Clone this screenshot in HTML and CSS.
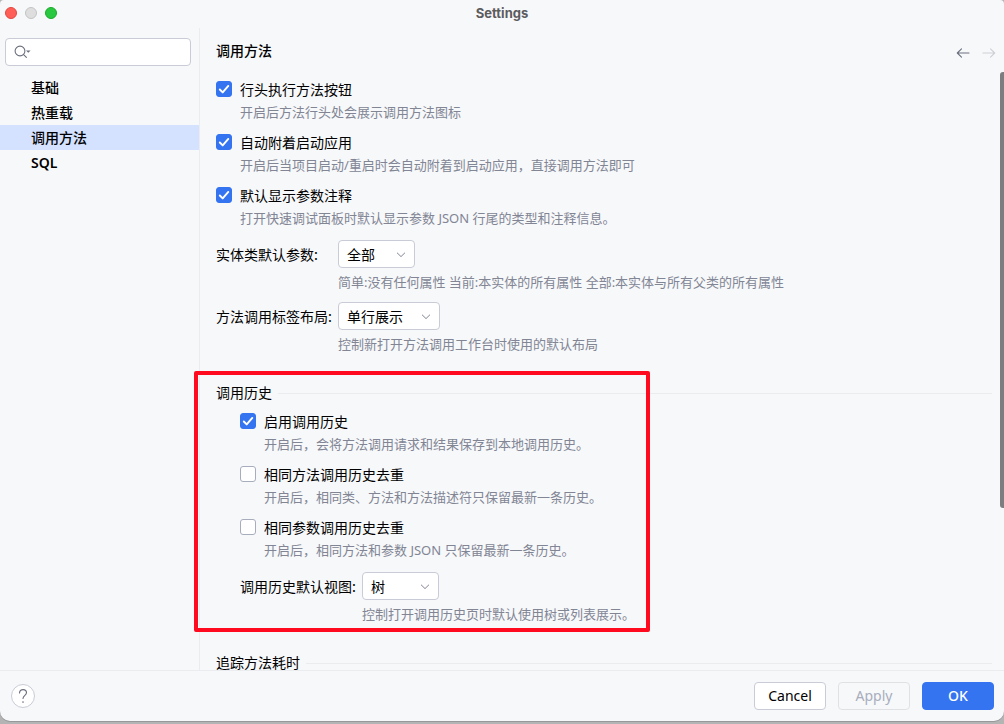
FILE: index.html
```html
<!DOCTYPE html>
<html lang="zh-CN">
<head>
<meta charset="utf-8">
<title>Settings</title>
<link rel="stylesheet" href="styles.css">
</head>
<body>
<svg class="symbols" aria-hidden="true">
  <symbol id="check" viewBox="0 0 16 16"><path d="M3.8 8.5L6.7 11.4L12.3 4.9" fill="none" stroke="#fff" stroke-width="1.9" stroke-linecap="round" stroke-linejoin="round"/></symbol>
  <symbol id="chevron" viewBox="0 0 16 16"><path d="M4.3 7L8 10.6L11.7 7" fill="none" stroke="#818594" stroke-width="1" stroke-linecap="round" stroke-linejoin="round"/></symbol>
</svg>
<div class="window">
  <header class="titlebar">
    <div class="lights">
      <button class="light light-close" aria-label="Close"></button>
      <button class="light light-min" aria-label="Minimize"></button>
      <button class="light light-max" aria-label="Zoom"></button>
    </div>
    <h1 class="window-title">Settings</h1>
  </header>

  <div class="body">
    <aside class="sidebar">
      <div class="search">
        <svg class="search-icon" viewBox="0 0 18 16" aria-hidden="true">
          <circle cx="6" cy="7" r="4.9" fill="none" stroke="#6c707e" stroke-width="1.1"/>
          <path d="M9.6 10.6L12.4 13.4" stroke="#6c707e" stroke-width="1.1" stroke-linecap="round"/>
          <path d="M12 6.4H16.6L14.3 8.8Z" fill="#6c707e"/>
        </svg>
        <input class="search-input" type="text" aria-label="Search">
      </div>
      <nav class="nav">
        <a class="nav-item" href="#">基础</a>
        <a class="nav-item" href="#">热重载</a>
        <a class="nav-item selected" href="#" aria-current="page">调用方法</a>
        <a class="nav-item latin" href="#">SQL</a>
      </nav>
    </aside>

    <main class="content">
      <div class="page-head">
        <h2 class="page-title">调用方法</h2>
        <div class="history-nav">
          <button class="arrow" aria-label="Back"><svg viewBox="0 0 16 16"><path d="M14 8H2.5M6.5 3.8L2.3 8L6.5 12.2" fill="none" stroke="#6c707e" stroke-width="1.1" stroke-linecap="round" stroke-linejoin="round"/></svg></button>
          <button class="arrow" aria-label="Forward" disabled><svg viewBox="0 0 16 16"><path d="M2 8H13.5M9.5 3.8L13.7 8L9.5 12.2" fill="none" stroke="#cdcfd5" stroke-width="1.1" stroke-linecap="round" stroke-linejoin="round"/></svg></button>
        </div>
      </div>

      <div class="panel">
        <div class="options">
          <div class="option">
            <label class="option-label"><span class="box"><input type="checkbox" checked><svg><use href="#check"/></svg></span>行头执行方法按钮</label>
            <p class="hint">开启后方法行头处会展示调用方法图标</p>
          </div>
          <div class="option">
            <label class="option-label"><span class="box"><input type="checkbox" checked><svg><use href="#check"/></svg></span>自动附着启动应用</label>
            <p class="hint">开启后当项目启动/重启时会自动附着到启动应用，直接调用方法即可</p>
          </div>
          <div class="option">
            <label class="option-label"><span class="box"><input type="checkbox" checked><svg><use href="#check"/></svg></span>默认显示参数注释</label>
            <p class="hint">打开快速调试面板时默认显示参数 JSON 行尾的类型和注释信息。</p>
          </div>
        </div>

        <div class="fields">
          <label class="field-label" for="entity">实体类默认参数:</label>
          <div class="dropdown"><select id="entity"><option>全部</option></select><svg><use href="#chevron"/></svg></div>
          <p class="field-hint">简单:没有任何属性 当前:本实体的所有属性 全部:本实体与所有父类的所有属性</p>
          <label class="field-label second" for="layout">方法调用标签布局:</label>
          <div class="dropdown second"><select id="layout" class="wide"><option>单行展示</option></select><svg><use href="#chevron"/></svg></div>
          <p class="field-hint">控制新打开方法调用工作台时使用的默认布局</p>
        </div>

        <section class="group">
          <h3 class="group-title">调用历史</h3>
          <div class="group-body">
            <div class="options">
              <div class="option">
                <label class="option-label"><span class="box"><input type="checkbox" checked><svg><use href="#check"/></svg></span>启用调用历史</label>
                <p class="hint">开启后，会将方法调用请求和结果保存到本地调用历史。</p>
              </div>
              <div class="option">
                <label class="option-label"><span class="box"><input type="checkbox"><svg><use href="#check"/></svg></span>相同方法调用历史去重</label>
                <p class="hint">开启后，相同类、方法和方法描述符只保留最新一条历史。</p>
              </div>
              <div class="option">
                <label class="option-label"><span class="box"><input type="checkbox"><svg><use href="#check"/></svg></span>相同参数调用历史去重</label>
                <p class="hint">开启后，相同方法和参数 JSON 只保留最新一条历史。</p>
              </div>
            </div>
            <div class="fields">
              <label class="field-label" for="view">调用历史默认视图:</label>
              <div class="dropdown"><select id="view"><option>树</option></select><svg><use href="#chevron"/></svg></div>
              <p class="field-hint">控制打开调用历史页时默认使用树或列表展示。</p>
            </div>
          </div>
          <div class="highlight"></div>
        </section>

        <section class="group">
          <h3 class="group-title">追踪方法耗时</h3>
        </section>
      </div>
      <div class="scroll-thumb"></div>
    </main>
  </div>

  <footer class="footer">
    <button class="help" aria-label="Help"><svg viewBox="0 0 24 24"><path d="M8.2 8.6C8.2 6.4 9.8 5 12 5C14.2 5 15.8 6.4 15.8 8.4C15.8 11.2 12 11.4 12 14.8" fill="none" stroke="#6c707e" stroke-width="1.2" stroke-linecap="round"/><circle cx="12" cy="18.6" r="0.9" fill="#6c707e"/></svg></button>
    <div class="actions">
      <button class="btn">Cancel</button>
      <button class="btn" disabled>Apply</button>
      <button class="btn primary">OK</button>
    </div>
  </footer>
</div>
</body>
</html>
```
FILE: styles.css
```css
* {
  box-sizing: border-box;
}

body {
  margin: 0;
  height: 100vh;
  padding-bottom: 3px;
  background: #b4b4b5;
  color: #000;
  font: 14px/24px "Noto Sans CJK SC", sans-serif;
}

h1, h2, h3, p {
  margin: 0;
}

button, input, select {
  margin: 0;
  padding: 0;
  font: inherit;
}

.symbols {
  position: absolute;
  width: 0;
  height: 0;
}

.window {
  display: flex;
  flex-direction: column;
  height: 100%;
  overflow: hidden;
  background: #f7f8fa;
  border-radius: 4px 4px 10px 10px;
  box-shadow: 0 1px 0 #98989a;
}

.titlebar {
  display: grid;
  grid-template-columns: 1fr auto 1fr;
  align-items: center;
  height: 28px;
  padding: 0 5px 2px;
}

.lights {
  display: flex;
  gap: 8px;
}

.light {
  width: 12px;
  height: 12px;
  border: 1px solid;
  border-radius: 50%;
}

.light-close {
  background: #ff5f57;
  border-color: #e2463f;
}

.light-min {
  background: #dedede;
  border-color: #c4c4c5;
}

.light-max {
  background: #28c840;
  border-color: #1aab29;
}

.window-title {
  color: #5c5c5e;
  font: 700 13px/20px Inter, sans-serif;
}

.body {
  display: flex;
  flex: 1;
  min-height: 0;
}

.sidebar {
  flex: none;
  width: 200px;
  padding-top: 10px;
  border-right: 1px solid #ebecf0;
}

.search {
  display: flex;
  align-items: center;
  gap: 4px;
  height: 28px;
  margin: 0 8px 9px 5px;
  padding: 0 8px;
  background: #fff;
  border: 1px solid #c9ccd6;
  border-radius: 4px;
}

.search-icon {
  flex: none;
  width: 18px;
  height: 16px;
}

.search-input {
  flex: 1;
  min-width: 0;
  border: 0;
  outline: 0;
  background: none;
}

.nav-item {
  display: block;
  padding-left: 31px;
  color: #000;
  font-weight: 500;
  line-height: 25px;
  text-decoration: none;
}

.nav-item.latin {
  font-family: "Noto Sans", sans-serif;
  font-weight: 600;
}

.nav-item.selected {
  background: #d4e2ff;
}

.content {
  position: relative;
  display: flex;
  flex: 1;
  flex-direction: column;
  min-width: 0;
  padding: 0 12px 0 16px;
}

.page-head {
  display: flex;
  flex: none;
  align-items: center;
  justify-content: space-between;
  height: 49px;
  padding-bottom: 5px;
}

.page-title {
  font-size: 14px;
  font-weight: 500;
}

.history-nav {
  display: flex;
  gap: 10px;
  margin: 5px -5px 0 0;
}

.arrow {
  width: 16px;
  height: 16px;
  border: 0;
  background: none;
}

.arrow svg {
  display: block;
}

.panel {
  flex: 1;
  min-height: 0;
  overflow-x: visible;
  overflow-y: clip;
}

.options {
  display: grid;
  gap: 7px;
}

.option-label {
  display: flex;
  align-items: center;
  gap: 8px;
}

.box, .dropdown {
  display: inline-grid;
  align-items: center;
}

.box > *, .dropdown > * {
  grid-area: 1 / 1;
}

.box svg {
  width: 16px;
  height: 16px;
  visibility: hidden;
  pointer-events: none;
}

.box input {
  width: 16px;
  height: 16px;
  appearance: none;
  background: #fff;
  border: 1px solid #a8adbd;
  border-radius: 3px;
}

.box input:checked {
  background: #3574f0;
  border-color: #3574f0;
}

.box input:checked + svg {
  visibility: visible;
}

.hint, .field-hint {
  color: #818594;
  font-family: "Noto Sans", "Noto Sans CJK SC", sans-serif;
  font-size: 13px;
}

.hint {
  padding-left: 24px;
  line-height: 22px;
}

.fields {
  display: grid;
  grid-template-columns: auto 1fr;
  column-gap: 6px;
  margin-top: 11px;
}

.field-label {
  line-height: 28px;
}

.field-hint {
  grid-column: 2;
  line-height: 28px;
}

.second {
  margin-top: 6px;
}

.dropdown {
  justify-self: start;
}

.dropdown select {
  width: 77px;
  height: 28px;
  padding: 0 8px;
  appearance: none;
  color: #000;
  background: #fff;
  border: 1px solid #c9ccd6;
  border-radius: 4px;
}

.dropdown select.wide {
  width: 102px;
}

.dropdown svg {
  justify-self: end;
  width: 16px;
  height: 16px;
  margin-right: 6px;
  pointer-events: none;
}

.group {
  position: relative;
  margin-top: 23px;
}

.group-title {
  display: flex;
  align-items: center;
  gap: 6px;
  padding-bottom: 2px;
  font-size: 14px;
  font-weight: 400;
  line-height: 22px;
}

.group-title::after {
  flex: 1;
  height: 1px;
  margin-top: 2px;
  background: #ebecf0;
  content: "";
}

.group-body {
  padding: 4px 0 0 24px;
}

.highlight {
  position: absolute;
  top: -10px;
  bottom: -4px;
  left: -22px;
  width: 456px;
  border: 4px solid #ff0a1e;
  border-radius: 2px;
  pointer-events: none;
}

.scroll-thumb {
  position: absolute;
  top: 44px;
  right: 0;
  width: 4px;
  height: 436px;
  background: #7c7d7e;
  border-radius: 3px 0 0 3px;
}

.footer {
  display: flex;
  flex: none;
  align-items: center;
  justify-content: space-between;
  height: 51px;
  padding: 0 10px 0 11px;
  border-top: 1px solid #ebecf0;
}

.help {
  width: 24px;
  height: 24px;
  background: #fff;
  border: 1px solid #c9ccd6;
  border-radius: 50%;
}

.help svg {
  display: block;
}

.actions {
  display: flex;
  gap: 12px;
}

.btn {
  min-width: 72px;
  height: 28px;
  padding: 0 13px;
  color: #000;
  background: #fff;
  border: 1px solid #c9ccd6;
  border-radius: 4px;
  font: 14px/26px "Noto Sans", sans-serif;
}

.btn:disabled {
  color: #a8adbd;
  background: none;
  border-color: #dfe1e5;
}

.btn.primary {
  color: #fff;
  background: #3574f0;
  border-color: #3574f0;
  font-weight: 500;
}
```
